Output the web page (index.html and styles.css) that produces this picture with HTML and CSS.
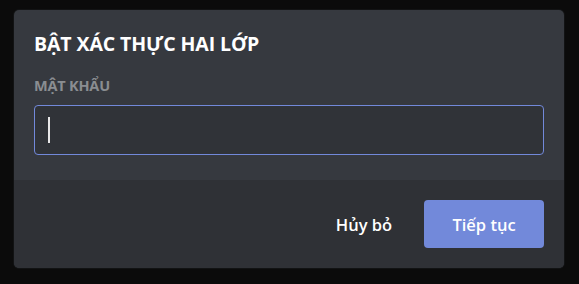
FILE: index.html
```html
<!DOCTYPE html>
<html lang="vi">
<head>
<meta charset="utf-8">
<link rel="stylesheet" href="styles.css">
</head>
<body>
<div class="backdrop">
  <div class="modal">
    <div class="modal-body">
      <h2 class="modal-title">BẬT XÁC THỰC HAI LỚP</h2>
      <div class="field-label">MẬT KHẨU</div>
      <div class="input focused"><span class="caret"></span></div>
    </div>
    <div class="modal-footer">
      <button class="btn btn-link">Hủy bỏ</button>
      <button class="btn btn-primary">Tiếp tục</button>
    </div>
  </div>
</div>
</body>
</html>
```
FILE: styles.css
```css
html, body {
  margin: 0;
  padding: 0;
  background: #0b0b0b;
  width: 579px;
  height: 284px;
  overflow: hidden;
  font-family: "Open Sans", "Noto Sans", sans-serif;
}
.backdrop {
  padding: 10px 0 0 14px;
}
.modal {
  width: 550px;
  height: 258px;
  background: #36393f;
  border-radius: 5px;
  overflow: hidden;
  box-shadow: 0 0 0 1px rgba(20, 21, 23, 0.8);
  display: flex;
  flex-direction: column;
}
.modal-body {
  height: 170px;
  box-sizing: border-box;
  padding: 22px 20px 0 20px;
}
.modal-title {
  margin: 0;
  font-size: 19.5px;
  line-height: 24px;
  font-weight: 700;
  color: #ffffff;
  letter-spacing: -0.1px;
}
.field-label {
  margin-top: 21.5px;
  font-size: 14.5px;
  line-height: 16px;
  font-weight: 700;
  color: #8a8d91;
  letter-spacing: -0.2px;
}
.input {
  margin-top: 11.5px;
  height: 49.5px;
  box-sizing: border-box;
  border: 1px solid #7289da;
  border-radius: 4px;
  background: #303338;
  display: flex;
  align-items: center;
  padding-left: 13px;
}
.caret {
  display: block;
  width: 1.5px;
  height: 26px;
  background: #e8e8e8;
}
.modal-footer {
  flex: 1;
  background: #2f3136;
  padding: 20px;
  display: flex;
  justify-content: flex-end;
  align-items: center;
}
.btn {
  height: 47.5px;
  min-width: 120px;
  border: none;
  border-radius: 4px;
  font-family: "Open Sans", "Noto Sans", sans-serif;
  font-size: 16.5px;
  font-weight: 600;
  color: #ffffff;
  padding: 0 20px;
  cursor: pointer;
}
.btn-link {
  background: transparent;
}
.btn-primary {
  background: #7289da;
}
```
